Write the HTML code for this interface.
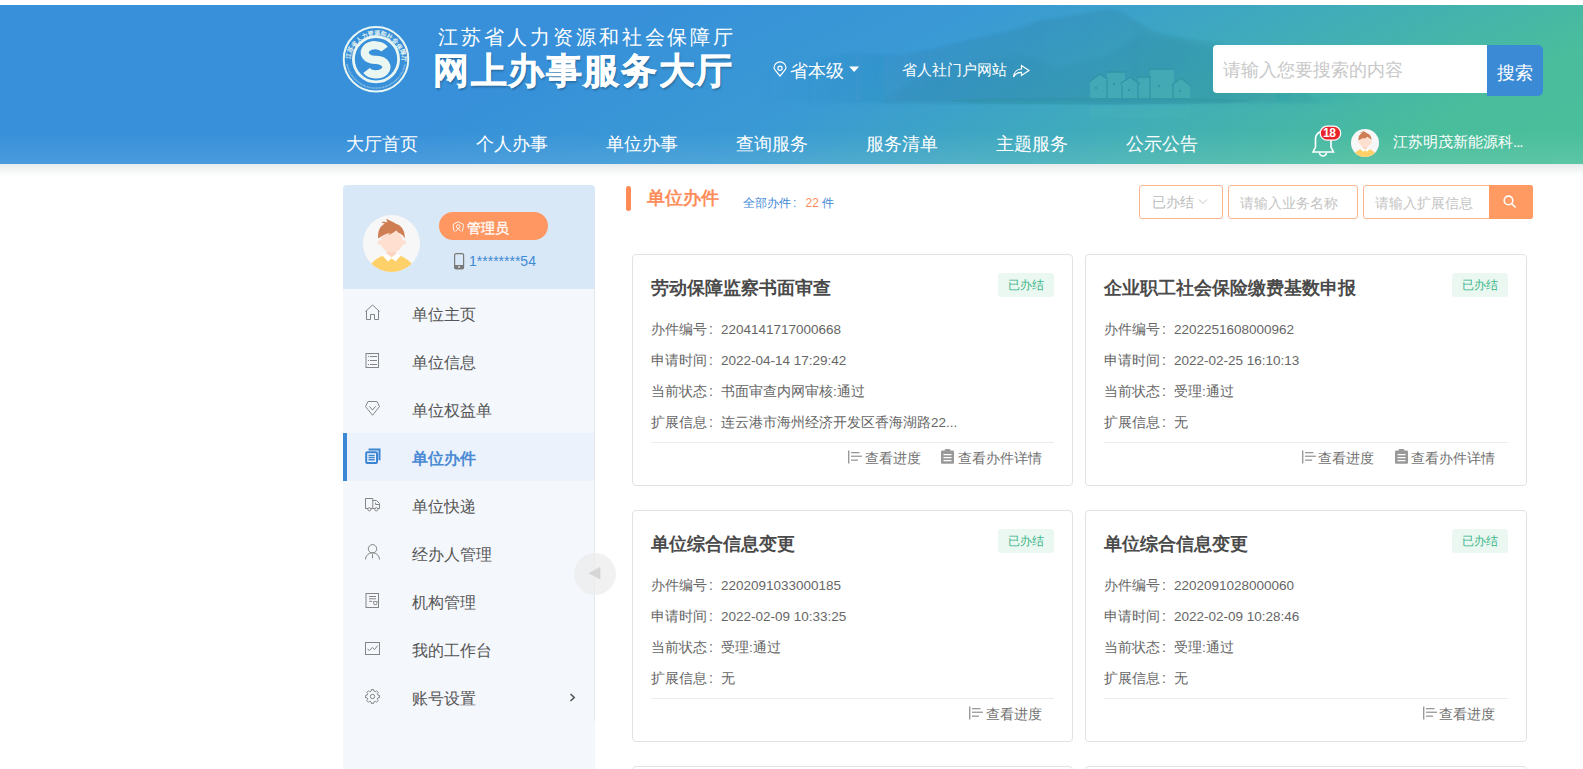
<!DOCTYPE html>
<html><head><meta charset="utf-8">
<style>
*{box-sizing:border-box;margin:0;padding:0}
html,body{width:1583px;height:769px;overflow:hidden;background:#fff;font-family:"Liberation Sans",sans-serif;color:#333}
.abs{position:absolute;white-space:nowrap}
.nav{position:absolute;top:132px;font-size:18px;color:#fff;line-height:24px;white-space:nowrap}
#side{position:absolute;left:343px;top:185px;width:252px;height:600px;background:#f4f7fc;border-radius:4px 4px 0 0}
#prof{position:absolute;left:0;top:0;width:252px;height:104px;background:#d9e8f6;border-radius:4px 4px 0 0}
#sbr{position:absolute;left:594px;top:289px;width:1px;height:432px;background:#e3e6ea}
.mi{position:absolute;left:343px;width:251px;height:48px}
.mi .t{position:absolute;left:69px;top:16px;font-size:16px;line-height:20px;color:#555;white-space:nowrap}
.mi svg{position:absolute;left:21px;top:16px}
.mi.on{background:#ebf2fb;border-left:4px solid #3b88d4}
.mi.on .t{left:65px;color:#4a8ad4;font-weight:bold}
.mi.on svg{left:17px}
.card{position:absolute;height:232px;border:1px solid #e2e2e2;border-radius:4px;background:#fff}
.cl{left:632px;width:441px}.cr{left:1085px;width:442px}
.card .ti{position:absolute;left:18px;top:21px;font-size:18px;font-weight:bold;color:#4a4a4a;line-height:24px;white-space:nowrap}
.card .bd{position:absolute;right:18px;top:18px;width:56px;height:24px;background:#eaf8f1;color:#3cb58a;font-size:12px;line-height:24px;text-align:center;border-radius:3px}
.card .ln{position:absolute;left:18px;font-size:14px;color:#666;line-height:18px;white-space:nowrap}
.co{font-style:normal;display:inline-block;width:14px;padding-left:2px}
.co2{font-style:normal;display:inline-block;width:14.5px;padding-left:2px}
.card .ln b{font-weight:normal;font-size:13.5px}
.card .sep{position:absolute;left:18px;right:18px;top:187px;border-top:1px solid #ececec}
.card .act{position:absolute;top:194px;font-size:14px;color:#707070;line-height:18px;white-space:nowrap}
.card .act svg{position:absolute;top:1px}
</style></head><body>
<svg class="abs" style="left:0;top:5px" width="1583" height="159" viewBox="0 0 1583 159" preserveAspectRatio="none">
 <defs>
  <linearGradient id="hg" gradientUnits="userSpaceOnUse" x1="650" y1="0" x2="1000" y2="670">
   <stop offset="0" stop-color="#3790d9"/>
   <stop offset="0.22" stop-color="#3a9ad4"/>
   <stop offset="0.42" stop-color="#40acba"/>
   <stop offset="0.62" stop-color="#49bd9c"/>
   <stop offset="1" stop-color="#4dc398"/>
  </linearGradient>
  <linearGradient id="hv" x1="0" y1="0" x2="0" y2="1">
   <stop offset="0" stop-color="#fff" stop-opacity="0"/>
   <stop offset="0.8" stop-color="#fff" stop-opacity="0"/>
   <stop offset="1" stop-color="#fff" stop-opacity="0.1"/>
  </linearGradient>
 </defs>
 <rect width="1583" height="159" fill="url(#hg)"/>
<defs><filter id="bl" x="-10%" y="-50%" width="120%" height="200%"><feGaussianBlur stdDeviation="1.5"/></filter>
 <filter id="bl2"><feGaussianBlur stdDeviation="0.7"/></filter>
 <linearGradient id="mfade" x1="0" y1="0" x2="1" y2="0"><stop offset="0" stop-color="#1f6f9a" stop-opacity="0"/><stop offset="0.3" stop-color="#1f6f9a" stop-opacity="0.2"/><stop offset="0.75" stop-color="#1f7f90" stop-opacity="0.22"/><stop offset="1" stop-color="#1f7f90" stop-opacity="0"/></linearGradient></defs>
 <path d="M760 70 L800 55 L850 48 L900 50 L938 43 L976 33 L1014 25 L1041 15 L1077 10 L1107 4 L1122 7 L1153 26 L1178 32 L1216 38 L1254 45 L1300 58 L1340 75 L1370 98 L760 98 Z" fill="url(#mfade)" filter="url(#bl)"/>
 <path d="M880 98 L905 80 L940 62 L980 55 L1020 50 L1060 62 L1100 52 L1115 45 L1140 30 L1178 35 L1228 50 L1280 70 L1320 98 Z" fill="#1d6e8e" opacity="0.07" filter="url(#bl)"/>
 <g filter="url(#bl2)" opacity="0.4">
  <ellipse cx="1100" cy="96" rx="150" ry="3.5" fill="#2a8a98" opacity="0.6"/>
  <g fill="#55bdbb">
   <path d="M1090 93 V76 L1100 69 L1108 75 V93 Z"/><rect x="1107" y="67" width="18" height="26"/>
   <path d="M1122 93 V78 L1130 73 L1139 78 V93 Z"/><rect x="1138" y="72" width="13" height="21"/>
   <rect x="1150" y="64" width="24" height="29"/><path d="M1173 93 V79 L1181 74 L1190 80 V93 Z"/>
  </g>
  <g fill="none" stroke="#2a8a98" stroke-width="1.3">
   <path d="M1089 77 L1100 69 L1108 74 M1106 67 H1126 M1120 79 L1130 72 L1140 79 M1137 72 H1151 M1149 64 H1175 M1172 80 L1181 73 L1191 81 M1107 75 V93 M1122 80 V93 M1138 78 V93 M1150 70 V93 M1173 80 V93"/>
  </g>
  <g fill="#2a8a98"><rect x="1095" y="82" width="2" height="2"/><rect x="1113" y="78" width="2" height="2"/><rect x="1128" y="84" width="2" height="2"/><rect x="1158" y="80" width="2" height="2"/><rect x="1179" y="85" width="2" height="2"/></g>
  <g fill="#4db7b6" opacity="0.5"><rect x="1090" y="101" width="100" height="12"/></g>
 </g>
 <rect width="1583" height="159" fill="url(#hv)"/>
</svg>
<div class="abs" style="left:0;top:164px;width:1583px;height:12px;background:linear-gradient(#e8ebeb,rgba(255,255,255,0))"></div>
<!-- logo -->
<svg class="abs" style="left:341px;top:24px" width="70" height="70" viewBox="0 0 70 70">
 <defs><path id="lgp" d="M35 37 m-25.8 0 a25.8 25.8 0 1 1 51.6 0"/><path id="lgp2" d="M35 35 m-29.5 2 a29.5 29.5 0 0 0 59 0"/></defs>
 <circle cx="35" cy="35.3" r="32.3" fill="none" stroke="#eaf6f2" stroke-width="2"/>
 <circle cx="35" cy="35.3" r="22.6" fill="none" stroke="#eaf6f2" stroke-width="2.8"/>
 <text font-size="6" fill="#eaf6f2" letter-spacing="0.15" font-weight="bold"><textPath href="#lgp" startOffset="2%">江苏省人力资源和社会保障厅</textPath></text>
 <path d="M6 40 A29.5 29.5 0 0 0 64 40" fill="none" stroke="#eaf6f2" stroke-width="1.6" stroke-dasharray="0.8 0.7" opacity="0.55"/>
 <path d="M43.5 25.2 A10.5 7.3 0 1 0 33.5 35.8 L35.6 35.8 A10.6 7.3 0 1 1 25.5 46.5" fill="none" stroke="#eaf6f2" stroke-width="8.2"/>
</svg>
<div class="abs" style="left:438px;top:25px;font-size:20px;letter-spacing:2.95px;color:#fff;line-height:24px">江苏省人力资源和社会保障厅</div>
<div class="abs" style="left:433px;top:50px;font-size:36px;font-weight:bold;letter-spacing:1.6px;color:#fff;line-height:42px;text-shadow:1px 2px 2px rgba(0,0,0,.25);-webkit-text-stroke:0.5px #fff">网上办事服务大厅</div>
<div class="abs" style="left:790px;top:59px;font-size:18px;color:#fff;line-height:24px">省本级</div>
<div class="abs" style="left:902px;top:60px;font-size:15px;color:#fff;line-height:20px">省人社门户网站</div>
<div class="abs" style="left:1213px;top:45px;width:274px;height:48px;background:#fff;border-radius:4px 0 0 4px"></div>
<div class="abs" style="left:1223px;top:58px;font-size:18px;color:#c8c8c8;line-height:24px">请输入您要搜索的内容</div>
<div class="abs" style="left:1487px;top:45px;width:56px;height:51px;background:#3b8ad6;border-radius:0 5px 5px 0;color:#fff;font-size:18px;line-height:56px;text-align:center">搜索</div>
<div class="nav" style="left:346px">大厅首页</div>
<div class="nav" style="left:476px">个人办事</div>
<div class="nav" style="left:606px">单位办事</div>
<div class="nav" style="left:736px">查询服务</div>
<div class="nav" style="left:866px">服务清单</div>
<div class="nav" style="left:996px">主题服务</div>
<div class="nav" style="left:1126px">公示公告</div>
<div class="abs" style="left:1393px;top:132px;font-size:15px;color:#fff;line-height:20px">江苏明茂新能源科<span style="letter-spacing:-1px">...</span></div>

<div id="side"><div id="prof"></div></div>
<div id="sbr"></div>
<div class="abs" style="left:439px;top:212px;width:109px;height:28px;background:#fe9762;border-radius:14px"></div>
<div class="abs" style="left:467px;top:219px;font-size:14px;color:#fff;line-height:18px;-webkit-text-stroke:0.3px #fff">管理员</div>
<div class="abs" style="left:469px;top:253px;font-size:14px;color:#3d8ad4;line-height:16px">1********54</div>
<svg class="abs" style="left:0;top:0" width="0" height="0"><defs>
 <symbol id="av" viewBox="0 0 57 57">
  <clipPath id="avc"><circle cx="28.5" cy="28.5" r="28.5"/></clipPath>
  <circle cx="28.5" cy="28.5" r="28.5" fill="#f7f7f7"/>
  <g clip-path="url(#avc)">
   <path d="M5 60 L8.5 48.5 C12 44.5 16 42.2 19.5 41 L37.5 41 C41 42.2 45 44.5 48.5 48.5 L52 60 Z" fill="#fdd06a"/>
   <rect x="23.6" y="32" width="9.6" height="9.5" fill="#fcd3bf"/>
   <path d="M19.5 40.5 L24.9 46.5 L28.7 43.2 L32.5 46.5 L37.8 40.5 L33.2 38.8 L28.7 42.3 L24.2 38.8 Z" fill="#fff"/>
   <circle cx="16.8" cy="27.5" r="2.2" fill="#ffe0d0"/><circle cx="40.8" cy="27.5" r="2.2" fill="#ffe0d0"/>
   <ellipse cx="28.8" cy="26.6" rx="11.2" ry="10.9" fill="#ffe0d0"/>
   <path d="M15.2 23.5 C14.5 15.5 17.5 10.5 22 8.8 L18.3 7.2 C20.8 6.5 22.8 6.7 24.5 7.4 L23.2 3.8 C27.5 5.8 30.5 7.3 32.8 8.8 C38.5 10.3 42 15.5 41.9 23.6 C40.6 20.8 37.8 18.3 35 17.5 L33.3 15.6 C30.5 18 27.8 19.3 25.2 20 L27 17.8 C22.2 19 19 21 15.2 23.5 Z" fill="#cf7d52"/>
  </g>
 </symbol>
</defs></svg>
<svg class="abs" style="left:363px;top:215px" width="57" height="57"><use href="#av"/></svg>
<svg class="abs" style="left:1351px;top:129px" width="28" height="28"><use href="#av"/></svg>

<div class="mi" style="top:289px"><svg width="16" height="16"></svg><div class="t">单位主页</div></div>
<div class="mi" style="top:337px"><svg width="16" height="16"></svg><div class="t">单位信息</div></div>
<div class="mi" style="top:385px"><svg width="16" height="16"></svg><div class="t">单位权益单</div></div>
<div class="mi on" style="top:433px"><svg width="16" height="16"></svg><div class="t">单位办件</div></div>
<div class="mi" style="top:481px"><svg width="16" height="16"></svg><div class="t">单位快递</div></div>
<div class="mi" style="top:529px"><svg width="16" height="16"></svg><div class="t">经办人管理</div></div>
<div class="mi" style="top:577px"><svg width="16" height="16"></svg><div class="t">机构管理</div></div>
<div class="mi" style="top:625px"><svg width="16" height="16"></svg><div class="t">我的工作台</div></div>
<div class="mi" style="top:673px"><svg width="16" height="16"></svg><div class="t">账号设置</div></div>

<div class="abs" style="left:626px;top:186px;width:5px;height:25px;background:#fe8b55;border-radius:3px"></div>
<div class="abs" style="left:647px;top:186px;font-size:18px;font-weight:bold;color:#fd8d5a;line-height:24px">单位办件</div>
<div class="abs" style="left:743px;top:195px;font-size:12px;color:#3f88d6;line-height:16px">全部办件<i class="co2">:</i><span style="color:#fd8d5a">22</span> 件</div>

<div class="abs" style="left:1139px;top:185px;width:84px;height:34px;border:1px solid #fbb58c;border-radius:3px;background:#fff"></div>
<div class="abs" style="left:1152px;top:193px;font-size:14px;color:#bbb;line-height:18px">已办结</div>
<div class="abs" style="left:1228px;top:185px;width:130px;height:34px;border:1px solid #fbb58c;border-radius:3px;background:#fff"></div>
<div class="abs" style="left:1240px;top:194px;font-size:14px;color:#c4c4c4;line-height:18px">请输入业务名称</div>
<div class="abs" style="left:1363px;top:185px;width:170px;height:34px;border:1px solid #fbb58c;border-radius:3px;background:#fff"></div>
<div class="abs" style="left:1375px;top:194px;font-size:14px;color:#c4c4c4;line-height:18px">请输入扩展信息</div>
<div class="abs" style="left:1489px;top:185px;width:44px;height:34px;background:#fe9a62;border-radius:0 3px 3px 0"></div>
<div class="card cl" style="top:254px">
 <div class="ti">劳动保障监察书面审查</div><div class="bd">已办结</div>
 <div class="ln" style="top:65px">办件编号<i class="co">:</i><b>2204141717000668</b></div>
 <div class="ln" style="top:96px">申请时间<i class="co">:</i><b>2022-04-14 17:29:42</b></div>
 <div class="ln" style="top:127px">当前状态<i class="co">:</i>书面审查内网审核<b>:</b>通过</div>
 <div class="ln" style="top:158px">扩展信息<i class="co">:</i>连云港市海州经济开发区香海湖路<b>22...</b></div>
 <div class="sep"></div>
 <div class="act" style="left:232px">查看进度</div>
 <div class="act" style="left:325px">查看办件详情</div>
</div>
<div class="card cr" style="top:254px">
 <div class="ti">企业职工社会保险缴费基数申报</div><div class="bd">已办结</div>
 <div class="ln" style="top:65px">办件编号<i class="co">:</i><b>2202251608000962</b></div>
 <div class="ln" style="top:96px">申请时间<i class="co">:</i><b>2022-02-25 16:10:13</b></div>
 <div class="ln" style="top:127px">当前状态<i class="co">:</i>受理<b>:</b>通过</div>
 <div class="ln" style="top:158px">扩展信息<i class="co">:</i>无</div>
 <div class="sep"></div>
 <div class="act" style="left:232px">查看进度</div>
 <div class="act" style="left:325px">查看办件详情</div>
</div>
<div class="card cl" style="top:510px">
 <div class="ti">单位综合信息变更</div><div class="bd">已办结</div>
 <div class="ln" style="top:65px">办件编号<i class="co">:</i><b>2202091033000185</b></div>
 <div class="ln" style="top:96px">申请时间<i class="co">:</i><b>2022-02-09 10:33:25</b></div>
 <div class="ln" style="top:127px">当前状态<i class="co">:</i>受理<b>:</b>通过</div>
 <div class="ln" style="top:158px">扩展信息<i class="co">:</i>无</div>
 <div class="sep"></div>
 <div class="act" style="left:353px">查看进度</div>
</div>
<div class="card cr" style="top:510px">
 <div class="ti">单位综合信息变更</div><div class="bd">已办结</div>
 <div class="ln" style="top:65px">办件编号<i class="co">:</i><b>2202091028000060</b></div>
 <div class="ln" style="top:96px">申请时间<i class="co">:</i><b>2022-02-09 10:28:46</b></div>
 <div class="ln" style="top:127px">当前状态<i class="co">:</i>受理<b>:</b>通过</div>
 <div class="ln" style="top:158px">扩展信息<i class="co">:</i>无</div>
 <div class="sep"></div>
 <div class="act" style="left:353px">查看进度</div>
</div>
<div class="card cl" style="top:766px"></div>
<div class="card cr" style="top:766px"></div>
<svg class="abs" style="left:0;top:0;pointer-events:none" width="1583" height="769" viewBox="0 0 1583 769">
 <g fill="none" stroke="#858585" stroke-width="1" stroke-linejoin="miter">
  <path d="M365.5 311.5 L372.5 305 L379.5 311.5 M366.5 310.5 V319.5 H370.5 V314.5 H374.5 V319.5 H378.5 V310.5"/>
  <rect x="366" y="353.5" width="12.5" height="14"/>
  <path d="M370 356.5 H377 M370 360.5 H377 M370 364.5 H377" />
  <path d="M368 356.5 H369 M368 360.5 H369 M368 364.5 H369" />
  <path d="M368 401.5 H377 L379.5 406.5 L372.5 415.3 L365.5 406.5 Z M369.4 406.4 L372.5 410 L375.6 406.4"/>
  <path d="M365.5 498.5 H372.8 V508.5 H365.5 Z M372.8 500.5 H376.6 L379.5 503.5 V508.5 H372.8 M375.6 502.5 V504.5 H379.2"/>
  <circle cx="369.4" cy="509.3" r="1.6" fill="#f4f7fc"/><circle cx="376.3" cy="509.3" r="1.6" fill="#f4f7fc"/>
  <circle cx="372.5" cy="548.8" r="4.2"/>
  <path d="M365.5 559.5 A7 6.8 0 0 1 379.5 559.5 M372.5 554.2 V558.3"/>
  <rect x="366" y="593.5" width="12.5" height="14"/>
  <path d="M369 596.5 H376 M369 598.8 H376 M369 601.3 H372"/>
  <path d="M373.3 601.5 L374 604.6 H376.6 L377.2 601.5 Z" stroke-width="0.9"/>
  <rect x="365.5" y="642.5" width="14" height="12"/>
  <path d="M367.5 649 L369.4 650.5 L372.3 647.4 L374.5 649.7 L377.6 645.6"/>
  <path d="M379.41 695.35 L379.41 697.65 L377.93 697.85 L377.30 699.39 L378.20 700.57 L376.57 702.20 L375.39 701.30 L373.85 701.93 L373.65 703.41 L371.35 703.41 L371.15 701.93 L369.61 701.30 L368.43 702.20 L366.80 700.57 L367.70 699.39 L367.07 697.85 L365.59 697.65 L365.59 695.35 L367.07 695.15 L367.70 693.61 L366.80 692.43 L368.43 690.80 L369.61 691.70 L371.15 691.07 L371.35 689.59 L373.65 689.59 L373.85 691.07 L375.39 691.70 L376.57 690.80 L378.20 692.43 L377.30 693.61 L377.93 695.15 Z"/>
  <circle cx="372.5" cy="696.5" r="2.2"/>
 </g>
 <!-- active icon -->
 <g fill="none" stroke="#3b84d2" stroke-width="2">
  <path d="M368.6 449.4 H379.5 V460.3"/>
  <rect x="366.2" y="452.2" width="10.8" height="10.8" rx="1"/>
  <path d="M368.5 455.5 H374.7 M368.5 457.6 H374.7 M368.5 459.8 H374.7" stroke-width="1.4"/>
 </g>
 <!-- chevron -->
 <path d="M570.5 694 L574.2 697.5 L570.5 701" fill="none" stroke="#555" stroke-width="1.6"/>
 <!-- collapse btn -->
 <circle cx="595" cy="574" r="21" fill="#ececec" fill-opacity="0.75"/>
 <path d="M588.5 573.2 L600.4 566.8 V579.6 Z" fill="#d6d6d6"/>
 <!-- header icons -->
 <g fill="none" stroke="#fff" stroke-width="1.2">
  <path d="M780 76 C776.5 72 774 69 774 67.8 A6 6 0 0 1 786 67.8 C786 69 783.5 72 780 76 Z"/>
  <circle cx="780" cy="68.2" r="2.1"/>
  <path d="M1013.5 77 C1014 72.5 1017 69 1021.5 69 V65.5 L1029 70.5 L1021.5 75.5 V72.3 C1018 72.3 1015 74 1013.5 77 Z"/>
 </g>
 <path d="M849.2 66.5 H859.1 L854.15 72.1 Z" fill="#fff"/>
 <!-- bell -->
 <g fill="none" stroke="#fff" stroke-width="1.6">
  <path d="M1313 152 L1315.5 147 V138 A7.8 7.8 0 0 1 1331 138 V147 L1333.5 152 Z"/>
  <path d="M1319.5 152.5 A3.5 3.5 0 0 0 1326.5 152.5"/>
 </g>
 <rect x="1320.2" y="126.2" width="20.5" height="14" rx="7" fill="#e8232b" stroke="#fff" stroke-width="1.3"/>
 <path d="M1199 199.5 L1203 203.5 L1207 199.5" fill="none" stroke="#c4c4c4" stroke-width="1"/>
 <!-- search icons -->
 <g fill="none" stroke="#fff" stroke-width="1.6">
  <circle cx="1508.5" cy="200.4" r="4.3"/>
  <path d="M1511.8 203.7 L1515.6 207.5"/>
 </g>
 <!-- action icons -->
 <g id="ai1" fill="#999">
  <rect x="848" y="450.5" width="1.4" height="13"/>
  <rect x="851" y="452" width="8.5" height="1.3"/>
  <rect x="851" y="455.6" width="11" height="1.3"/>
  <rect x="851" y="459.5" width="7" height="1.3"/>
 </g>
 <g id="ai2">
  <rect x="941" y="450.5" width="13" height="13.3" rx="1.2" fill="#999"/>
  <rect x="944.7" y="449" width="5.6" height="2.4" rx="1" fill="#999"/>
  <path d="M943.5 454.6 H951.5 M943.5 457.7 H951.5 M943.5 460.7 H951.5" stroke="#fff" stroke-width="1.3"/>
 </g>
 <use href="#ai1" x="454" y="0"/><use href="#ai2" x="454" y="0"/>
 <use href="#ai1" x="121" y="256"/><use href="#ai1" x="575" y="256"/>
 <!-- phone -->
 <rect x="454.6" y="253.6" width="9" height="15.3" rx="1.6" fill="none" stroke="#7a7a7a" stroke-width="1.2"/>
 <rect x="454.6" y="265" width="9" height="3.9" fill="#7a7a7a"/>
 <rect x="458.2" y="266.3" width="1.8" height="1.2" fill="#fff"/>
 <!-- badge icon -->
 <path d="M454.3 231.5 C453 228 453 225 453.5 224 L458.2 221.8 L463 224 C463.5 225 463.5 228 462.2 231.5 M455.6 231.5 L458.2 228.5 L460.9 231.5" fill="none" stroke="#fff" stroke-width="0.9"/>
 <circle cx="458.2" cy="226.5" r="1.8" fill="none" stroke="#fff" stroke-width="0.9"/>
</svg>
<div class="abs" style="left:1323px;top:127px;font-size:12px;font-weight:bold;color:#fff;line-height:12px;letter-spacing:-0.5px">18</div>
</body></html>
